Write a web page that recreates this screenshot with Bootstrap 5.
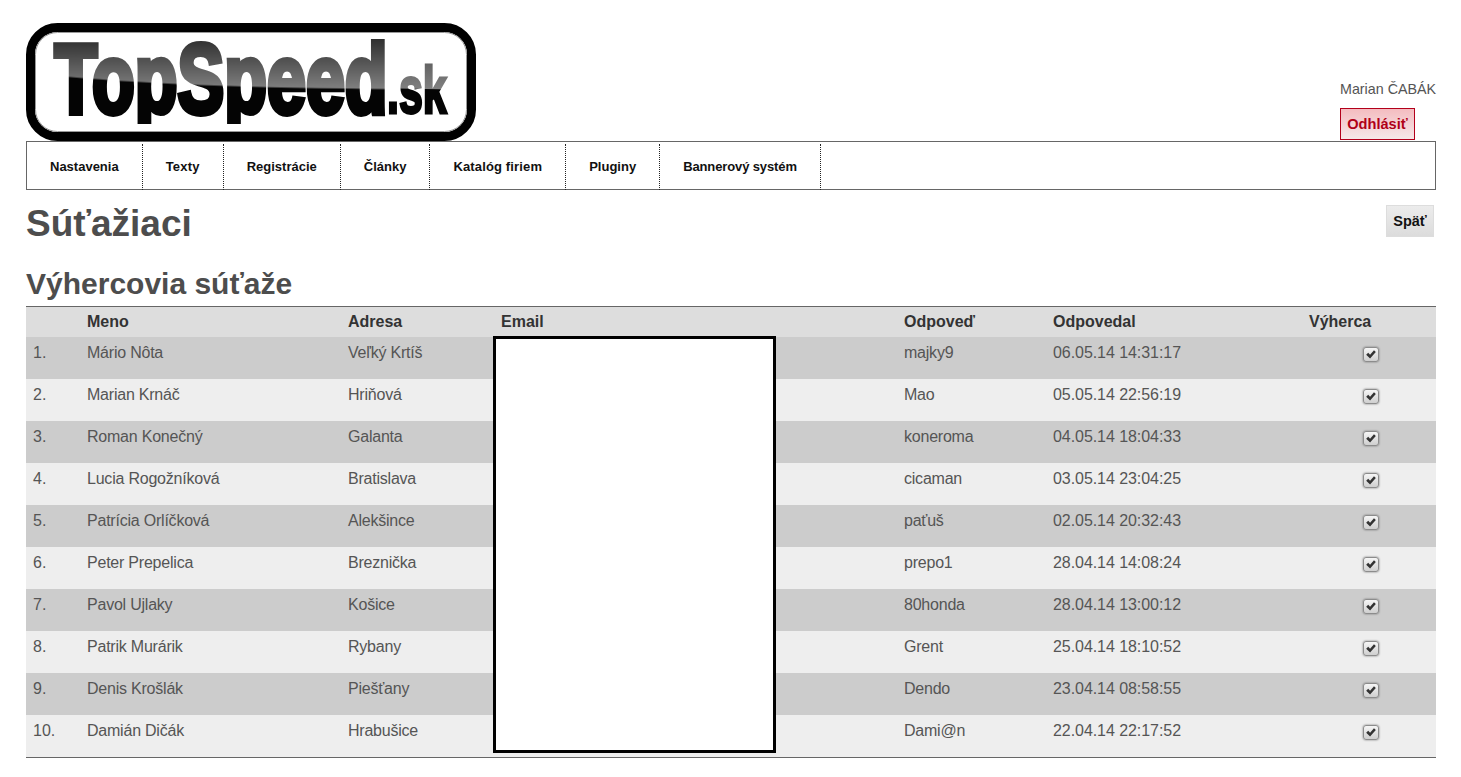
<!DOCTYPE html>
<html lang="sk">
<head>
<meta charset="utf-8">
<title>Súťažiaci</title>
<link href="https://cdn.jsdelivr.net/npm/bootstrap@5.3.0/dist/css/bootstrap.min.css" rel="stylesheet">
<style>
html,body{background:#fff;}
body{font-family:"Liberation Sans",Arial,sans-serif;color:#555;font-size:16px;line-height:20px;margin:0;overflow:hidden;}
.page-wrap{position:relative;width:1410px;margin-left:26px;height:777px;}
.head-row{height:141px;}
.site-logo{display:block;width:450px;height:118px;margin-top:23px;}
.logo-text{font-family:"Liberation Sans",Arial,sans-serif;font-weight:700;}
.logo-stroke{vector-effect:non-scaling-stroke;stroke-linejoin:miter;}
.user-box{width:96px;height:141px;padding-top:79px;}
.user-name{font-size:14.3px;line-height:20px;white-space:nowrap;color:#555;}
.logout-btn{display:block;width:75px;height:32px;margin-top:9px;padding:0;border:1px solid #b3001b;border-radius:0;background:linear-gradient(#f4bcc0,#f5e8e9);color:#b00017;font-size:14.6px;font-weight:700;line-height:30px;text-align:center;text-decoration:none;}
.main-menu{height:49px;border:1px solid #666;padding-top:2px;}
.menu-link{display:block;height:46px;padding:0 23px;border-right:1px dotted #222;color:#111;font-size:13px;font-weight:700;line-height:46px;text-decoration:none;white-space:nowrap;}
.menu-a{letter-spacing:.2px;}
.menu-b{letter-spacing:.15px;}
.menu-c{letter-spacing:-.12px;}
.title-row{height:64px;}
.page-title{margin:0;padding-top:13px;font-size:37px;line-height:42px;font-weight:700;color:#4d4d4d;font-family:inherit;}
.back-btn{display:block;width:48px;height:32px;margin:15px 2px 0 0;border:1px solid #ddd;border-radius:0;background:linear-gradient(#ececec,#dcdcdc);color:#111;font-size:14.5px;font-weight:700;line-height:30px;text-align:center;text-decoration:none;}
.sub-title{margin:0;height:52px;padding-top:13px;font-size:30px;line-height:34px;font-weight:700;color:#4d4d4d;font-family:inherit;}
.win-table{width:1410px;table-layout:fixed;border-collapse:separate;border-spacing:0;margin:0;border-top:1px solid #666;border-bottom:1px solid #666;}
.win-table th{height:30px;padding:0 7px;background:#ddd;color:#333;font-size:16px;font-weight:700;line-height:29px;vertical-align:top;}
.win-table td{height:42px;padding:6px 7px 0;font-size:16px;line-height:20px;color:#555;vertical-align:top;}
.win-table td.cell-tight{letter-spacing:-.22px;}
.win-table td.cell-date{letter-spacing:-.06px;}
.win-table tbody tr:nth-child(odd) td{background:#ccc;}
.win-table tbody tr:nth-child(even) td{background:#eee;}
.win-table .cell-check{padding:0 0 0 61px;text-align:left;}
.tick{appearance:none;-webkit-appearance:none;display:block;width:16px;height:15px;margin:10px 0 0 0;border:1px solid #8c8c8c;border-radius:3px;box-shadow:0 0 2px #666;background-image:url("data:image/svg+xml,%3Csvg xmlns='http://www.w3.org/2000/svg' viewBox='0 0 14 14'%3E%3Cpath d='M1.8 7.2l2.2-2 2 2 4.2-4.8 2 1.8-6.2 7.2z' fill='%23333'/%3E%3C/svg%3E"),linear-gradient(#f6f6f6,#cfcfcf);background-size:100% 100%;}
.redact-box{position:absolute;left:467px;top:336px;width:283px;height:417px;background:#fff;border:3px solid #000;}
</style>
</head>
<body>
<div class="page-wrap">
  <div class="head-row d-flex justify-content-between">
    <svg class="site-logo" viewBox="0 0 450 118" role="img" aria-label="TopSpeed.sk">
      <defs>
        <linearGradient id="lg1" x1="0" y1="0" x2="0" y2="1"><stop offset="0" stop-color="#2a2a2a"/><stop offset="1" stop-color="#858585"/></linearGradient>
        <linearGradient id="lg2" x1="0" y1="0" x2="0" y2="1"><stop offset="0" stop-color="#555"/><stop offset="1" stop-color="#8a8a8a"/></linearGradient>
        <pattern id="fill1" patternUnits="userSpaceOnUse" x="-5" y="-55" width="350" height="75">
          <rect width="350" height="40" fill="url(#lg1)"/>
          <path d="M0 28Q125 37 350 38V75H0Z" fill="#040404"/>
        </pattern>
        <pattern id="fill2" patternUnits="userSpaceOnUse" x="-2" y="-40" width="80" height="60">
          <rect width="80" height="30" fill="url(#lg2)"/>
          <path d="M0 24L80 25V60H0Z" fill="#040404"/>
        </pattern>
        <clipPath id="logoClip"><rect x="0" y="0" width="450" height="101"/></clipPath>
      </defs>
      <rect x="4.5" y="4.5" width="441" height="109" rx="27" fill="#fff" stroke="#000" stroke-width="9"/>
      <rect x="9.5" y="9.5" width="431" height="99" rx="22" fill="none" stroke="#999" stroke-width="1"/>
      <g clip-path="url(#logoClip)">
        <text class="logo-text logo-stroke" transform="translate(28.5 90) scale(1 1.4)" font-size="70" fill="url(#fill1)" stroke="url(#fill1)" stroke-width="5">TopSpeed</text>
        <text class="logo-text logo-stroke" transform="translate(361 90) scale(1 1.55)" font-size="43" fill="url(#fill2)" stroke="url(#fill2)" stroke-width="2.5">.sk</text>
      </g>
    </svg>
    <div class="user-box">
      <div class="user-name">Marian ČABÁK</div>
      <a class="logout-btn" href="#">Odhlásiť</a>
    </div>
  </div>
  <nav class="main-menu d-flex">
    <a class="menu-link" href="#">Nastavenia</a>
    <a class="menu-link menu-a" href="#">Texty</a>
    <a class="menu-link" href="#">Registrácie</a>
    <a class="menu-link" href="#">Články</a>
    <a class="menu-link menu-b" href="#">Katalóg firiem</a>
    <a class="menu-link" href="#">Pluginy</a>
    <a class="menu-link menu-c" href="#">Bannerový systém</a>
  </nav>
  <div class="title-row d-flex justify-content-between">
    <h1 class="page-title">Súťažiaci</h1>
    <a class="back-btn" href="#">Späť</a>
  </div>
  <h2 class="sub-title">Výhercovia súťaže</h2>
  <table class="win-table">
    <colgroup><col style="width:54px"><col style="width:261px"><col style="width:153px"><col style="width:403px"><col style="width:149px"><col style="width:256px"><col></colgroup>
    <thead><tr><th></th><th>Meno</th><th>Adresa</th><th>Email</th><th>Odpoveď</th><th>Odpovedal</th><th>Výherca</th></tr></thead>
    <tbody>
      <tr><td>1.</td><td class="cell-tight">Mário Nôta</td><td class="cell-tight">Veľký Krtíš</td><td></td><td class="cell-tight">majky9</td><td class="cell-date">06.05.14 14:31:17</td><td class="cell-check"><input class="tick" type="checkbox" checked aria-label="Výherca"></td></tr>
      <tr><td>2.</td><td class="cell-tight">Marian Krnáč</td><td class="cell-tight">Hriňová</td><td></td><td class="cell-tight">Mao</td><td class="cell-date">05.05.14 22:56:19</td><td class="cell-check"><input class="tick" type="checkbox" checked aria-label="Výherca"></td></tr>
      <tr><td>3.</td><td class="cell-tight">Roman Konečný</td><td class="cell-tight">Galanta</td><td></td><td class="cell-tight">koneroma</td><td class="cell-date">04.05.14 18:04:33</td><td class="cell-check"><input class="tick" type="checkbox" checked aria-label="Výherca"></td></tr>
      <tr><td>4.</td><td class="cell-tight">Lucia Rogožníková</td><td class="cell-tight">Bratislava</td><td></td><td class="cell-tight">cicaman</td><td class="cell-date">03.05.14 23:04:25</td><td class="cell-check"><input class="tick" type="checkbox" checked aria-label="Výherca"></td></tr>
      <tr><td>5.</td><td class="cell-tight">Patrícia Orlíčková</td><td class="cell-tight">Alekšince</td><td></td><td class="cell-tight">paťuš</td><td class="cell-date">02.05.14 20:32:43</td><td class="cell-check"><input class="tick" type="checkbox" checked aria-label="Výherca"></td></tr>
      <tr><td>6.</td><td class="cell-tight">Peter Prepelica</td><td class="cell-tight">Breznička</td><td></td><td class="cell-tight">prepo1</td><td class="cell-date">28.04.14 14:08:24</td><td class="cell-check"><input class="tick" type="checkbox" checked aria-label="Výherca"></td></tr>
      <tr><td>7.</td><td class="cell-tight">Pavol Ujlaky</td><td class="cell-tight">Košice</td><td></td><td class="cell-tight">80honda</td><td class="cell-date">28.04.14 13:00:12</td><td class="cell-check"><input class="tick" type="checkbox" checked aria-label="Výherca"></td></tr>
      <tr><td>8.</td><td class="cell-tight">Patrik Murárik</td><td class="cell-tight">Rybany</td><td></td><td class="cell-tight">Grent</td><td class="cell-date">25.04.14 18:10:52</td><td class="cell-check"><input class="tick" type="checkbox" checked aria-label="Výherca"></td></tr>
      <tr><td>9.</td><td class="cell-tight">Denis Krošlák</td><td class="cell-tight">Piešťany</td><td></td><td class="cell-tight">Dendo</td><td class="cell-date">23.04.14 08:58:55</td><td class="cell-check"><input class="tick" type="checkbox" checked aria-label="Výherca"></td></tr>
      <tr><td>10.</td><td class="cell-tight">Damián Dičák</td><td class="cell-tight">Hrabušice</td><td></td><td class="cell-tight">Dami@n</td><td class="cell-date">22.04.14 22:17:52</td><td class="cell-check"><input class="tick" type="checkbox" checked aria-label="Výherca"></td></tr>
    </tbody>
  </table>
  <div class="redact-box"></div>
</div>
<script src="https://cdn.jsdelivr.net/npm/bootstrap@5.3.0/dist/js/bootstrap.bundle.min.js"></script>
</body>
</html>
